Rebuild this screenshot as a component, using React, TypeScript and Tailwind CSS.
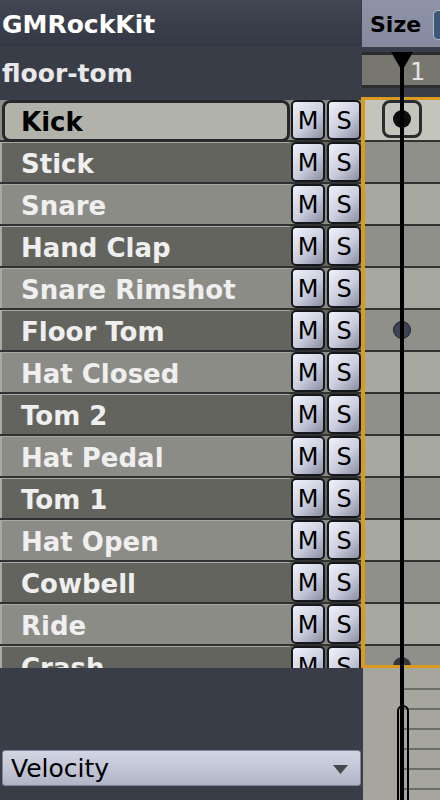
import React from "react";

const DRUMS = [
  "Kick",
  "Stick",
  "Snare",
  "Hand Clap",
  "Snare Rimshot",
  "Floor Tom",
  "Hat Closed",
  "Tom 2",
  "Hat Pedal",
  "Tom 1",
  "Hat Open",
  "Cowbell",
  "Ride",
  "Crash",
];

/* ---- M / S toggle ---- */

function ToggleButton({ label }: { label: string }) {
  return (
    <button className="flex h-[40px] w-[34px] shrink-0 items-center justify-center rounded-[5px] border-2 border-[#16171a] bg-[linear-gradient(135deg,#f0f2fb_0%,#c9cddd_55%,#8a8ea3_100%)] pt-[2px] text-[24px] leading-none text-black">
      {label}
    </button>
  );
}

/* ---- instrument row (left list) ---- */

function DrumRow({ name, index }: { name: string; index: number }) {
  const selected = index === 0;
  const light = index % 2 === 0;
  return (
    <div
      className={
        "flex h-[42px] shrink-0 items-start border-b-2 border-[#303130] " +
        (light ? "bg-[#8b8c86]" : "bg-[#64645e]")
      }
    >
      {selected ? (
        <div className="ml-[2px] -mb-[2px] flex h-[42px] w-[288px] shrink-0 items-center rounded-[8px] border-[3px] border-[#26282c] bg-[#b1b2a9] pt-[3px] pl-[16px] text-[26px] font-bold text-black">
          {name}
        </div>
      ) : (
        <div className="flex h-[40px] w-[290px] shrink-0 items-center border-t border-l-2 border-[#a9a9a3] pt-[3px] pl-[19px] text-[26px] font-bold text-[#efefef]">
          {name}
        </div>
      )}
      <div className="ml-px flex gap-[2px]">
        <ToggleButton label="M" />
        <ToggleButton label="S" />
      </div>
    </div>
  );
}

/* ---- pattern cell row (right grid) ---- */

function GridRow({ name, index }: { name: string; index: number }) {
  const selected = index === 0;
  const light = index % 2 === 0;
  const bg = selected ? "bg-[#c3c4bb]" : light ? "bg-[#a7a8a0]" : "bg-[#8f908a]";
  return (
    <div className={"flex h-[42px] shrink-0 items-start border-b-2 border-[#333432] " + bg}>
      {selected && (
        <div className="ml-[17px] flex h-[38px] w-[40px] items-center justify-center rounded-[8px] border-[3px] border-[#2a2c30]">
          <span className="h-[18px] w-[18px] rounded-full bg-[#0d0d0d]" />
        </div>
      )}
      {name === "Floor Tom" && (
        <span className="ml-[28px] mt-[11px] h-[18px] w-[18px] rounded-full border border-[#1f2229] bg-[#3d4354]" />
      )}
      {name === "Crash" && (
        <span className="ml-[28px] mt-[11px] h-[18px] w-[18px] rounded-full bg-[#34363b]" />
      )}
    </div>
  );
}

export default function App() {
  return (
    <div className="flex h-[800px] w-[440px] overflow-hidden bg-[#393d48] font-['DejaVu_Sans','Liberation_Sans',sans-serif]">
      {/* left: kit + instrument list */}
      <div className="flex w-[361px] shrink-0 flex-col">
        <div className="flex h-[47px] shrink-0 items-center bg-[linear-gradient(180deg,#424653_0%,#343844_100%)] px-[2px] pt-[3px] text-[25px] font-bold text-white">
          GMRockKit
        </div>
        <div className="flex h-[50px] shrink-0 items-center px-[2px] pt-[3px] text-[25px] font-bold text-[#e8e8e8]">
          floor-tom
        </div>
        <div className="flex h-[571px] shrink-0 flex-col overflow-hidden pt-[3px]">
          {DRUMS.map((d, i) => (
            <DrumRow key={d} name={d} index={i} />
          ))}
        </div>
        <div className="flex flex-1 flex-col pt-[82px] pl-[2px]">
          <div className="flex h-[36px] items-center justify-between rounded-[3px] border border-[#7f8397] bg-[linear-gradient(180deg,#d2d5e3_0%,#c3c6d6_50%,#b1b4c5_100%)] pt-[2px] pl-[8px] pr-[12px] text-[25px] text-black">
            <span>Velocity</span>
            <svg width="15" height="9" viewBox="0 0 15 9">
              <path d="M0 0 L15 0 L7.5 9 Z" fill="#45474f" />
            </svg>
          </div>
        </div>
      </div>

      {/* right: pattern editor */}
      <div className="relative flex flex-1 flex-col">
        <div className="ml-px flex h-[47px] shrink-0 items-center gap-[12px] bg-[linear-gradient(180deg,#8f93a8_0%,#858aa0_100%)] pt-[2px] pl-[8px] text-[22px] font-bold text-black">
          <span>Size</span>
          <span className="h-[30px] w-[20px] rounded-[5px] border border-[#b3bdd0] bg-[#3b5878]" />
        </div>
        <div className="h-[5px] shrink-0" />
        <div className="ml-px flex h-[36px] shrink-0 items-center border-t-[3px] border-b-[3px] border-[#2c2d2e] bg-[#77776f] pl-[48px] pt-[4px] text-[24px] text-[#e4e4e4]">
          1
        </div>
        <div className="h-[9px] shrink-0" />
        <div className="flex h-[571px] shrink-0 flex-col bg-[#d99b1f] pt-[3px] pb-[3px] pl-[4px]">
          <div className="flex flex-1 flex-col overflow-hidden">
            {DRUMS.map((d, i) => (
              <GridRow key={d} name={d} index={i} />
            ))}
          </div>
        </div>
        <div className="ml-[2px] flex flex-1 flex-col gap-[18px] bg-[#a6a69e] pt-[20px] pl-[40px]">
          {[0, 1, 2, 3, 4, 5].map((n) => (
            <div key={n} className="h-[2px] shrink-0 bg-[#6e6e69]" />
          ))}
        </div>

        {/* playhead overlay */}
        <div className="absolute top-[52px] bottom-0 left-[39px] w-[4px] bg-black" />
        <svg className="absolute top-[52px] left-[30px]" width="22" height="19" viewBox="0 0 22 19">
          <path d="M0 0 L22 0 L11 19 Z" fill="#000" />
        </svg>
        <div className="absolute top-[705px] left-[36px] h-[120px] w-[12px] rounded-t-full border-2 border-black" />
      </div>
    </div>
  );
}
